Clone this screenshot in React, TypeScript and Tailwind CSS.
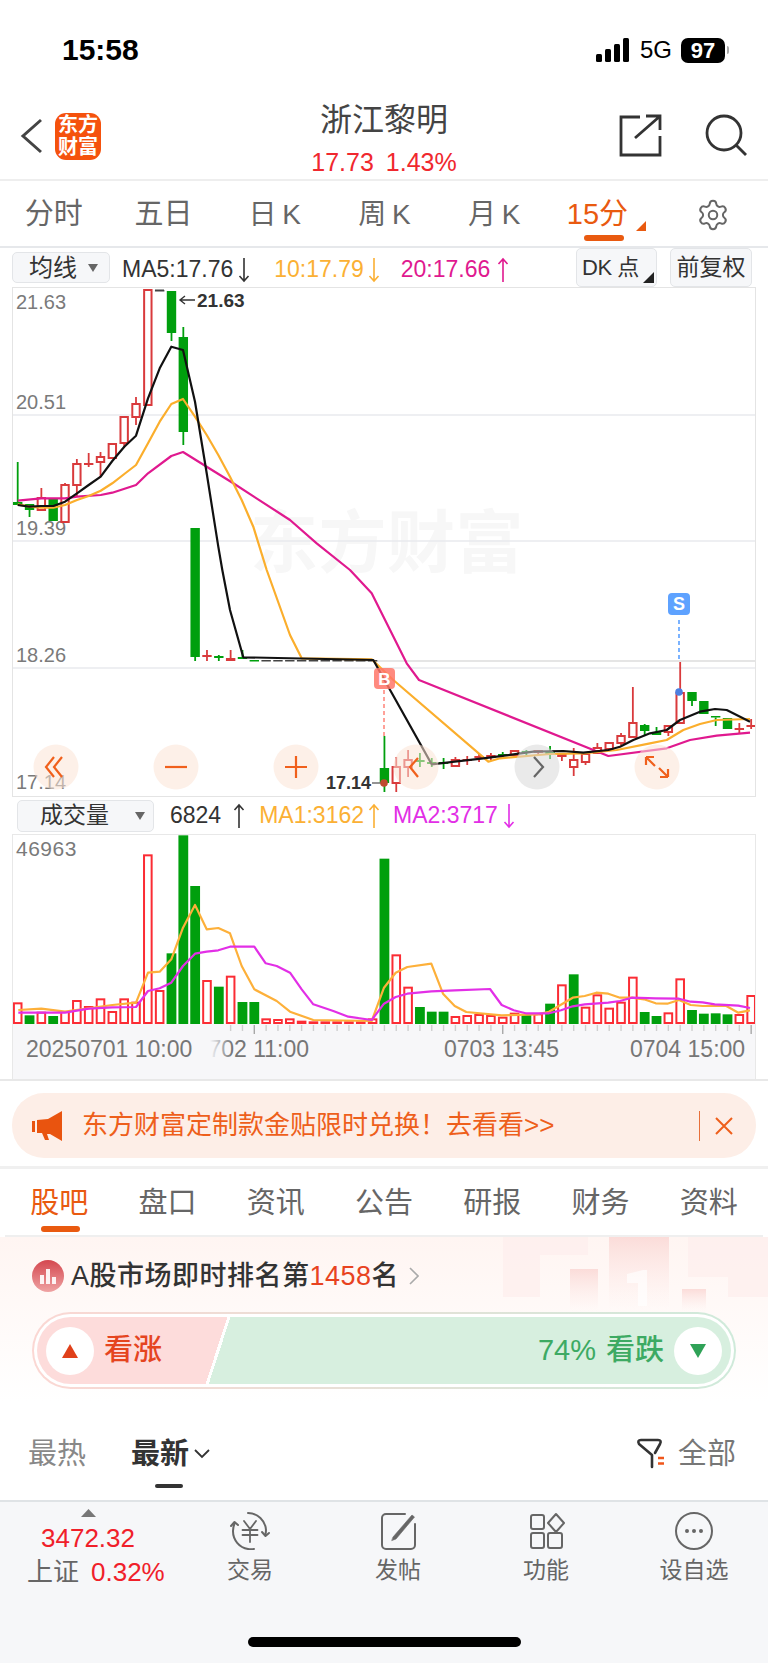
import React from 'react';
import { Settings } from 'lucide-react';

type Candle = [string, number, number, number?, number?];

const RED = '#d93a3c';
const GREEN = '#009f0d';
const cx = (i: number) => 17.7 + 11.83 * i;

// kind, body top, body bottom, wick top, wick bottom (page pixels)
const candles: Candle[] = [
  ['g', 502, 505, 462, 505], ['g', 504, 510, 504, 517], ['r', 498, 510, 488, 510], ['g', 498, 521],
  ['r', 485, 522, 483, 522], ['r', 464, 485, 459, 497], ['R', 463, 465, 453, 467], ['r', 457, 462, 452, 477],
  ['r', 444, 458], ['r', 417, 443, 417, 448], ['r', 404, 417, 397, 425], ['r', 290, 405],
  ['k', 290, 291.5], ['g', 291, 333, 291, 341], ['g', 337, 432, 327, 445], ['g', 528, 657, 528, 661],
  ['R', 655, 657, 650, 661], ['g', 656, 658, 655, 661], ['R', 658, 661, 650, 661], ['g', 657, 659, 650, 659],
  ['g', 660, 661.5], ['k', 660, 661.5], ['k', 660, 661.5], ['k', 660, 661.5], ['k', 660, 661.5],
  ['k', 660, 661.5], ['k', 660, 661.5], ['k', 660, 661.5], ['k', 660, 661.5], ['k', 660, 661.5], ['k', 660, 661.5],
  ['g', 768, 783, 736, 792], ['r', 767, 783, 757, 792], ['r', 760, 767, 750, 777], ['g', 760, 762, 753, 767],
  ['g', 762, 764, 758, 767], ['g', 762, 764, 758, 769], ['r', 760, 766, 757, 767], ['R', 759, 761, 756, 765],
  ['R', 756, 758, 753, 762], ['R', 755, 758, 753, 760], ['g', 754, 756, 752, 758], ['r', 751, 755, 750, 758],
  ['g', 751, 753, 750, 756], ['R', 750, 753, 750, 755], ['g', 751, 754, 746, 759], ['R', 754, 757, 754, 761],
  ['r', 760, 767, 748, 776], ['r', 754, 762, 754, 765], ['r', 748, 753, 743, 754], ['r', 743, 749, 743, 750],
  ['r', 736, 743, 733, 745], ['r', 723, 737, 687, 737], ['g', 725, 731, 724, 735], ['g', 732, 735, 727, 735],
  ['r', 726, 732, 726, 736], ['r', 693, 723, 662, 723], ['g', 692, 701, 692, 706], ['g', 701, 714],
  ['g', 716, 717.5, 716, 726], ['g', 718, 729], ['R', 728, 730, 723, 733], ['R', 725, 727, 719, 729],
];

const volumeTops: [string, number][] = [
  ['r', 607], ['g', 643], ['r', 635], ['g', 645], ['r', 633], ['r', 600], ['r', 618], ['r', 595], ['r', 633], ['r', 595],
  ['r', 605], ['r', 163], ['r', 570], ['g', 457], ['g', 103], ['g', 255], ['r', 540], ['g', 557], ['r', 527], ['g', 603],
  ['g', 603], ['r', 655], ['r', 657], ['r', 655], ['r', 662], ['r', 664], ['r', 664], ['r', 664], ['r', 664], ['r', 664],
  ['r', 655], ['g', 173], ['r', 463], ['r', 560], ['g', 618], ['g', 632], ['g', 632], ['r', 648], ['r', 645], ['r', 642],
  ['r', 645], ['r', 650], ['r', 638], ['g', 640], ['r', 640], ['g', 608], ['r', 553], ['g', 520], ['r', 620], ['r', 583],
  ['r', 623], ['r', 605], ['r', 530], ['g', 633], ['g', 645], ['r', 637], ['r', 535], ['g', 627], ['g', 638], ['g', 637],
  ['g', 640], ['r', 642], ['r', 585],
];

// the curves were read off 3x crops, so keep them in crop units
const crop = (x0: number, y0: number, pts: number[][]) =>
  pts.map(([x, y]) => `${(x0 + x / 3).toFixed(1)},${(y0 + y / 3).toFixed(1)}`).join(' ');

const ma5 = [
  crop(0, 270, [[53, 705], [88, 710], [124, 708], [160, 708], [195, 695], [231, 670], [266, 645], [302, 620], [337, 573], [373, 530], [408, 497], [444, 385], [479, 295], [514, 230], [549, 240], [585, 395], [620, 610], [655, 830], [667, 900]]),
  crop(0, 570, [[690, 120], [730, 262], [1120, 270]]),
  crop(350, 570, [[70, 270], [245, 583], [400, 565], [550, 545], [640, 543], [700, 548], [775, 540], [810, 530], [850, 510], [900, 490], [950, 480], [990, 450], [1050, 425], [1095, 417], [1130, 420], [1200, 455]]),
].join(' ');

const ma10 = [
  crop(0, 270, [[53, 703], [88, 710], [124, 713], [160, 713], [195, 705], [231, 690], [266, 678], [302, 662], [337, 640], [373, 612], [408, 585], [444, 520], [479, 455], [514, 402], [549, 387], [585, 440], [620, 495], [655, 555], [690, 620], [725, 690], [760, 770], [800, 900]]),
  crop(0, 570, [[870, 195], [905, 265], [1115, 268]]),
  crop(350, 570, [[130, 330], [415, 575], [450, 565], [600, 552], [700, 550], [800, 540], [900, 520], [950, 510], [1000, 480], [1050, 462], [1100, 450], [1200, 447]]),
].join(' ');

const ma20 = [
  crop(0, 270, [[53, 692], [124, 685], [195, 685], [231, 680], [302, 675], [337, 668], [408, 645], [444, 610], [514, 558], [549, 546], [620, 590], [700, 640], [870, 750], [950, 820], [1050, 900]]),
  crop(0, 570, [[1115, 70]]),
  crop(350, 570, [[170, 280], [207, 330], [775, 558], [950, 535], [1020, 510], [1100, 497], [1200, 488]]),
].join(' ');

const volMa1 = [
  crop(0, 800, [[55, 627], [124, 623], [195, 632], [266, 622], [337, 612], [408, 605], [444, 515], [479, 512], [514, 475], [549, 380], [585, 312], [620, 385], [655, 381], [690, 397], [725, 495], [763, 565], [830, 600], [870, 632], [940, 657], [1115, 660]]),
  crop(384, 800, [[0, 560], [35, 515], [70, 498], [142, 488], [177, 578], [212, 615], [247, 633], [353, 643], [460, 640], [495, 632], [566, 590], [602, 585], [637, 575], [673, 578], [708, 590], [743, 590], [780, 595], [815, 607], [850, 608], [885, 597], [920, 612], [956, 615], [1027, 615], [1063, 635], [1098, 628]]),
].join(' ');

const volMa2 = [
  crop(0, 800, [[55, 635], [195, 635], [266, 623], [337, 619], [408, 618], [444, 570], [479, 562], [514, 545], [549, 495], [585, 458], [620, 452], [655, 448], [690, 437], [763, 437], [797, 487], [830, 495], [870, 515], [905, 565], [940, 610], [1000, 630], [1045, 647], [1115, 657]]),
  crop(384, 800, [[0, 608], [35, 588], [70, 578], [142, 571], [212, 568], [318, 564], [353, 612], [389, 628], [425, 637], [495, 637], [531, 628], [566, 616], [602, 610], [673, 605], [708, 600], [743, 590], [815, 592], [885, 593], [920, 602], [956, 604], [992, 610], [1063, 614], [1098, 621]]),
].join(' ');

const Arrow: React.FC<{ up?: boolean; color: string }> = ({ up, color }) => (
  <svg width="12" height="26" viewBox="0 0 12 26" fill="none" stroke={color} strokeWidth="1.6">
    {up ? <path d="M6 25V2M1.5 7L6 2l4.5 5" /> : <path d="M6 1v23M1.5 19L6 24l4.5-5" />}
  </svg>
);

const Caret = () => (
  <svg width="12" height="10" viewBox="0 0 12 10" fill="#666">
    <path d="M1 1h10L6 9z" />
  </svg>
);

const PriceChart = () => (
  <svg width="742" height="508" viewBox="13 288 742 508" className="block">
    <text x="250" y="567" fontSize="68" fontWeight="700" fill="#f7f7f7" letterSpacing="0.500">东方财富</text>
    <g stroke="#e8eaee" strokeWidth="1.5">
      <line x1="13" x2="755" y1="415" y2="415" />
      <line x1="13" x2="755" y1="541" y2="541" />
      <line x1="13" x2="755" y1="668" y2="668" />
      <line x1="355" x2="755" y1="661" y2="661" stroke="#dcdcdc" />
    </g>
    <g fontSize="20" fill="#7a7a7a" dominantBaseline="central">
      <text x="16" y="302">21.63</text>
      <text x="16" y="402">20.51</text>
      <text x="16" y="528">19.39</text>
      <text x="16" y="655">18.26</text>
      <text x="16" y="782">17.14</text>
    </g>
    {candles.map(([kind, top, bot, wt, wb], i) => {
      const x = cx(i);
      const color = kind === 'g' ? GREEN : kind === 'k' ? '#444' : RED;
      return (
        <g key={i}>
          {wt !== undefined && <line x1={x} x2={x} y1={wt} y2={top} stroke={color} strokeWidth="1.8" />}
          {wb !== undefined && <line x1={x} x2={x} y1={bot} y2={wb} stroke={color} strokeWidth="1.8" />}
          {kind === 'r' ? (
            <rect x={x - 3.7} y={top} width={7.4} height={bot - top} fill="#fff" stroke={color} strokeWidth="2" />
          ) : (
            <rect x={x - 4.7} y={top} width={9.4} height={bot - top} fill={color} />
          )}
        </g>
      );
    })}
    <polyline points={ma20} fill="none" stroke="#e0198f" strokeWidth="2.2" strokeLinejoin="round" />
    <polyline points={ma10} fill="none" stroke="#fbae2c" strokeWidth="2.2" strokeLinejoin="round" />
    <polyline points={ma5} fill="none" stroke="#111" strokeWidth="2.2" strokeLinejoin="round" />

    <path d="M195 300h-15M185 296l-5 4 5 4" fill="none" stroke="#333" strokeWidth="1.4" />
    <text x="197" y="300" fontSize="19" fontWeight="700" fill="#333" dominantBaseline="central">21.63</text>
    <rect x="155" y="289.5" width="9" height="1.5" fill="#444" />
    <text x="326" y="783" fontSize="18" fontWeight="700" fill="#333" dominantBaseline="central">17.14</text>
    <line x1="372" x2="384" y1="783" y2="783" stroke="#666" strokeWidth="1.4" />
    <circle cx="384" cy="783" r="3.8" fill="#c0492f" />

    <line x1="384" x2="384" y1="690" y2="736" stroke="#ff8a80" strokeWidth="1.6" strokeDasharray="4 3" />
    <rect x="374" y="668" width="21" height="21" rx="4" fill="#ff7568" fillOpacity="0.85" />
    <text x="384.5" y="679" fontSize="17" fontWeight="700" fill="#fff" textAnchor="middle" dominantBaseline="central">B</text>
    <line x1="679" x2="679" y1="620" y2="660" stroke="#5aa0ff" strokeWidth="1.6" strokeDasharray="4 3" />
    <rect x="668" y="593" width="22" height="22" rx="4" fill="#5ea2ff" />
    <text x="679" y="604" fontSize="18" fontWeight="700" fill="#fff" textAnchor="middle" dominantBaseline="central">S</text>
    <circle cx="679" cy="692" r="3.8" fill="#4d7fe0" />

    {[56, 176, 296, 416, 657].map((x) => (
      <circle key={x} cx={x} cy="767" r="22.5" fill="#fbe3d6" fillOpacity="0.55" />
    ))}
    <circle cx="537" cy="767" r="22.5" fill="#d8d8d8" fillOpacity="0.55" />
    <g fill="none" stroke="#f0601c" strokeWidth="2.2">
      <path d="M54 757l-8 10 8 10M62 757l-8 10 8 10" />
      <path d="M165 767h22" />
      <path d="M285 767h22M296 756v22" />
      <path d="M420 758l-8 9 8 10" transform="translate(-2 0)" />
      <path d="M646 757h8M646 757v8M646 757l9 9M668 777h-8M668 777v-8M668 777l-9-9" />
    </g>
    <path d="M534 757l9 10-9 10" fill="none" stroke="#666" strokeWidth="2.2" />
  </svg>
);

const VolumeChart = () => (
  <svg width="742" height="244" viewBox="13 834 742 244" className="block">
    <defs>
      <linearGradient id="fade" x1="0" x2="1" y1="0" y2="0">
        <stop offset="0.45" stopColor="#f7f7f9" />
        <stop offset="1" stopColor="#f7f7f9" stopOpacity="0" />
      </linearGradient>
    </defs>
    <rect x="13" y="1023" width="742" height="55" fill="#f7f7f9" />
    <text x="16" y="847" fontSize="21" letterSpacing="0.5" fill="#7a7a7a" dominantBaseline="central">46963</text>
    {volumeTops.map(([kind, top], i) => {
      const x = cx(i);
      const y = 800 + top / 3;
      return kind === 'g' ? (
        <rect key={i} x={x - 4.9} y={y} width={9.8} height={1023 - y} fill={GREEN} />
      ) : (
        <rect key={i} x={x - 3.8} y={y} width={7.6} height={1022 - y} fill="#fff" stroke="#fb2c34" strokeWidth="2" />
      );
    })}
    <polyline points={volMa1} fill="none" stroke="#fdb03a" strokeWidth="2.2" strokeLinejoin="round" />
    <polyline points={volMa2} fill="none" stroke="#e22fe6" strokeWidth="2.2" strokeLinejoin="round" />
    {candles.map((_, i) =>
      i >= 18 ? (
        <line
          key={i}
          x1={cx(i)}
          x2={cx(i)}
          y1="1024"
          y2={i === 20 || i === 41 || i === 62 ? 1033 : 1030}
          stroke={i === 20 || i === 41 || i === 62 ? '#a8a8a8' : '#cfcfcf'}
          strokeWidth="1.4"
        />
      ) : null,
    )}
    <g fontSize="23" fill="#767676" dominantBaseline="central">
      <text x="309" y="1048" textAnchor="end">0702 11:00</text>
      <rect x="192" y="1036" width="40" height="26" fill="url(#fade)" />
      <text x="26" y="1048">20250701 10:00</text>
      <text x="444" y="1048">0703 13:45</text>
      <text x="630" y="1048">0704 15:00</text>
    </g>
  </svg>
);

const NavIcon: React.FC<{ kind: string }> = ({ kind }) => (
  <svg width="46" height="38" viewBox="0 0 46 38" fill="none" stroke="#666" strokeWidth="2" strokeLinecap="round" strokeLinejoin="round">
    {kind === 'trade' && (
      <>
        <path d="M21 1a18 18 0 0 1 18 17c0 2-.3 3.500-.8 5" />
        <path d="M35 20l3.500 4 3.500-3" />
        <path d="M27 37a18 18 0 0 1-6 0A18 18 0 0 1 6 19c0-3 .6-5.500 1.800-8" />
        <path d="M4 14l3.500-4 3.500 3" />
        <path d="M17 9l6 8 6-8M15.500 18h15M15.500 23h15M23 17v13" strokeWidth="1.8" />
      </>
    )}
    {kind === 'post' && (
      <>
        <path d="M30 2H11a4 4 0 0 0-4 4v27a4 4 0 0 0 4 4h25a4 4 0 0 0 4-4V12" />
        <path d="M18 25L37 3l2.500 2L21 27l-4 1.500z" fill="#666" strokeWidth="0.6" />
      </>
    )}
    {kind === 'grid' && (
      <>
        <rect x="8" y="3" width="13" height="14" rx="2" />
        <path d="M33 2l8 9-8 9-8-9z" />
        <rect x="8" y="21" width="13" height="15" rx="2" />
        <rect x="25" y="21" width="14" height="15" rx="2" />
      </>
    )}
    {kind === 'more' && (
      <>
        <circle cx="23" cy="19" r="18" />
        <circle cx="16" cy="19" r="1" fill="#666" />
        <circle cx="23" cy="19" r="1" fill="#666" />
        <circle cx="30" cy="19" r="1" fill="#666" />
      </>
    )}
  </svg>
);

const App: React.FC = () => {
  const infoTabs = ['盘口', '资讯', '公告', '研报', '财务', '资料'];

  return (
    <div className="w-[768px] h-[1663px] bg-white flex flex-col overflow-hidden font-['Liberation_Sans','Noto_Sans_CJK_SC',sans-serif] text-[#333]">
      {/* Status bar */}
      <div className="h-[100px] flex items-start justify-between pt-[32px] pl-[62px] pr-[39px] text-black">
        <span className="text-[30px] leading-[36px] font-bold">15:58</span>
        <div className="flex items-center gap-[9px] h-[36px]">
          <svg width="35" height="24" viewBox="0 0 35 24" fill="#000">
            <rect x="0" y="16" width="6" height="8" rx="1.500" />
            <rect x="9" y="11" width="6" height="13" rx="1.500" />
            <rect x="18" y="6" width="6" height="18" rx="1.500" />
            <rect x="27" y="0" width="6" height="24" rx="1.500" />
          </svg>
          <span className="text-[24px] leading-none">5G</span>
          <div className="flex items-center gap-[2px]">
            <span className="w-[44px] h-[25px] bg-black rounded-[7px] text-white text-[22px] font-bold leading-[25px] text-center">97</span>
            <span className="w-[2px] h-[8px] bg-[#aaa] rounded-r" />
          </div>
        </div>
      </div>

      {/* Title bar */}
      <div className="h-[81px] border-b-2 border-[#eeeeee] grid grid-cols-[1fr_auto_1fr]">
        <div className="flex items-center pl-[20px] pb-[7px]">
          <svg width="24" height="36" viewBox="0 0 24 36" fill="none" stroke="#444" strokeWidth="3">
            <path d="M21 2L3 18l18 16" />
          </svg>
          <div className="ml-[11px] w-[46px] h-[47px] rounded-[11px] bg-[#f5520d] text-white text-[20px] font-bold leading-[22px] text-center flex items-center justify-center">
            东方<br />财富
          </div>
        </div>
        <div className="flex flex-col items-center pt-[1px]">
          <span className="h-[38px] text-[32px] leading-[38px] text-[#444]">浙江黎明</span>
          <div className="mt-[9px] h-[28px] flex gap-[12px] text-[25px] leading-[28px] text-[#f0282e]">
            <span>17.73</span>
            <span>1.43%</span>
          </div>
        </div>
        <div className="flex items-start justify-end pt-[14px] pr-[21px] gap-[43px]">
          <svg width="44" height="43" viewBox="0 0 44 43" fill="none" stroke="#333" strokeWidth="2.800">
            <path d="M22 3H3v38h39V22M17 24L41 3M28 2h14v14" />
          </svg>
          <svg width="42" height="42" viewBox="0 0 42 42" fill="none" stroke="#333" strokeWidth="2.800">
            <circle cx="19" cy="19" r="17" />
            <path d="M31 31l10 10" />
          </svg>
        </div>
      </div>

      {/* Period tabs */}
      <div className="h-[67px] grid grid-cols-7 border-b-2 border-[#e6e8eb]">
        <div className="flex items-center justify-center text-[29px] text-[#666] pt-[2px] pr-[2px]">分时</div>
        <div className="flex items-center justify-center text-[29px] text-[#666] pt-[2px] pr-[2px]">五日</div>
        {['日 K', '周 K', '月 K'].map((t) => (
          <div key={t} className="flex items-center justify-center text-[28px] text-[#666] pt-[2px] tracking-[-1px]">{t}</div>
        ))}
        <div className="relative flex items-center justify-center text-[29px] text-[#e95a10] pt-[2px] pr-[12px]">
          15分
          <svg width="10" height="10" viewBox="0 0 10 10" className="absolute left-[87px] top-[40px]" fill="#e95a10">
            <path d="M10 0v10H0z" />
          </svg>
          <span className="absolute left-[35px] bottom-[5px] w-[40px] h-[6px] rounded-full bg-[#e95a10]" />
        </div>
        <div className="flex items-center justify-center pt-[2px]">
          <Settings size={34} strokeWidth={1.4} color="#666" />
        </div>
      </div>

      {/* MA values */}
      <div className="h-[39px] flex items-center text-[23px]">
        <div className="ml-[12px] w-[98px] h-[31px] bg-[#f6f7f9] border border-[#e3e5e8] rounded-[5px] flex items-center pl-[16px] gap-[10px] text-[#333] text-[24px]">
          均线<Caret />
        </div>
        <span className="ml-[12px] pt-[4px]">MA5:17.76</span>
        <span className="ml-[5px] pt-[4px]"><Arrow color="#333" /></span>
        <span className="ml-[24px] pt-[4px] text-[#fbb034]">10:17.79</span>
        <span className="ml-[4px] pt-[4px]"><Arrow color="#fbb034" /></span>
        <span className="ml-[21px] pt-[4px] text-[#e0198f]">20:17.66</span>
        <span className="ml-[7px] pt-[4px]"><Arrow up color="#e0198f" /></span>
        <div className="ml-auto relative w-[81px] h-[39px] bg-[#f6f7f9] border border-[#e3e5e8] rounded-[5px] flex items-center pl-[5px] text-[22px] tracking-[-0.5px]">
          DK 点
          <svg width="11" height="11" viewBox="0 0 11 11" className="absolute right-[2px] bottom-[3px]" fill="#222">
            <path d="M11 0v11H0z" />
          </svg>
        </div>
        <div className="ml-[13px] mr-[16px] w-[82px] h-[39px] bg-[#f6f7f9] border border-[#e3e5e8] rounded-[5px] flex items-center justify-center text-[23px]">
          前复权
        </div>
      </div>

      <div className="ml-[12px] w-[744px] h-[510px] border border-[#e4e4e4]">
        <PriceChart />
      </div>

      {/* Volume values */}
      <div className="h-[37px] flex items-center text-[23px]">
        <div className="ml-[17px] w-[137px] h-[32px] bg-[#f6f7f9] border border-[#e3e5e8] rounded-[5px] flex items-center pl-[22px] gap-[25px]">
          成交量<Caret />
        </div>
        <span className="ml-[16px]">6824</span>
        <span className="ml-[12px]"><Arrow up color="#333" /></span>
        <span className="ml-[14px] text-[#fbb034]">MA1:3162</span>
        <span className="ml-[4px]"><Arrow up color="#fbb034" /></span>
        <span className="ml-[13px] text-[#e22fe6]">MA2:3717</span>
        <span className="ml-[5px]"><Arrow color="#e22fe6" /></span>
      </div>

      <div className="ml-[12px] w-[744px] h-[245px] border-x border-t border-[#e8e8e8]">
        <VolumeChart />
      </div>
      <div className="h-[2px] bg-[#e8e8e8]" />

      {/* Promo */}
      <div className="h-[88px] border-b-[3px] border-[#f0f0f0] pt-[12px]">
        <div className="mx-[12px] h-[65px] rounded-[32px] bg-[#fdeee7] flex items-center pl-[20px] text-[#ee5f1b] text-[26px]">
          <svg width="32" height="30" viewBox="0 0 32 30" fill="#e9540f">
            <rect x="0" y="10" width="3" height="11" />
            <path d="M5 9l11-1L30 0v30l-12-7-3 0 2 6-4 0-3-7H5z" />
          </svg>
          <span className="ml-[18px]">东方财富定制款金贴限时兑换！去看看&gt;&gt;</span>
          <span className="ml-auto w-[1px] h-[30px] bg-[#e8703a]" />
          <svg width="18" height="18" viewBox="0 0 18 18" className="ml-[15px] mr-[23px]" fill="none" stroke="#ee5f1b" strokeWidth="2">
            <path d="M1 1l16 16M17 1L1 17" />
          </svg>
        </div>
      </div>

      {/* Info tabs */}
      <div className="h-[68px] ml-[5px] mr-[5px] grid grid-cols-7 border-b-2 border-[#efefef]">
        <div className="relative flex items-center justify-center text-[29px] text-[#e95a10] pt-[3px]">
          股吧
          <span className="absolute left-[36px] bottom-[3px] w-[39px] h-[6px] rounded-full bg-[#e95a10]" />
        </div>
        {infoTabs.map((t) => (
          <div key={t} className="flex items-center justify-center text-[29px] text-[#666] pt-[3px]">{t}</div>
        ))}
      </div>

      {/* Community */}
      <div className="relative h-[263px] bg-[linear-gradient(180deg,#fff5f2_0px,#ffffff_165px)]">
        <svg width="288" height="76" viewBox="0 0 288 76" className="absolute left-[480px] top-0">
          <defs>
            <linearGradient id="tower" x1="0" x2="0" y1="0" y2="1">
              <stop offset="0" stopColor="#fbdcd9" />
              <stop offset="1" stopColor="#fdecea" stopOpacity="0" />
            </linearGradient>
          </defs>
          <path d="M23 0h85v18H60v42H23z" fill="#fdeeec" opacity="0.7" />
          <path d="M208 0h80v60h-40V40h-40z" fill="#fdeeec" opacity="0.7" />
          <rect x="90" y="32" width="28" height="42" fill="url(#tower)" />
          <rect x="129" y="0" width="60" height="72" fill="url(#tower)" />
          <rect x="202" y="52" width="24" height="22" fill="url(#tower)" />
          <path d="M147 37l16-4h4v36h-9V46h-11z" fill="#fff" opacity="0.65" />
        </svg>

        <div className="relative h-[75px] flex items-center pl-[32px] text-[27px] font-medium pt-[3px] tracking-[0.5px]">
          <svg width="32" height="32" viewBox="0 0 32 32" className="mr-[7px]">
            <defs>
              <linearGradient id="rank" x1="0" x2="0" y1="0" y2="1">
                <stop offset="0" stopColor="#d4474f" />
                <stop offset="1" stopColor="#efa3a3" />
              </linearGradient>
            </defs>
            <circle cx="16" cy="16" r="16" fill="url(#rank)" />
            <path d="M8 24v-9h4v9zM14 24V9h4v15zM20 24v-7h4v7z" fill="#fff" opacity="0.9" />
          </svg>
          <span>A股市场即时排名第</span>
          <span className="text-[#e8431f]">1458</span>
          <span>名</span>
          <svg width="10" height="18" viewBox="0 0 10 18" className="ml-[10px]" fill="none" stroke="#aaa" strokeWidth="1.600">
            <path d="M1 1l8 8-8 8" />
          </svg>
        </div>

        <div className="relative mx-[32px] h-[77px] rounded-full p-[2px] bg-[linear-gradient(90deg,#fbd7d3,#cfeada)]">
          <div className="h-full rounded-full bg-white p-[3px]">
            <div className="h-full rounded-full flex items-center px-[9px] bg-[linear-gradient(108deg,#fddcdb_181px,#ffffff_181px,#ffffff_184px,#d7efdf_184px)]">
              <div className="w-[48px] h-[48px] rounded-full bg-white flex items-center justify-center">
                <svg width="16" height="14" viewBox="0 0 16 14" fill="#e0401a"><path d="M8 0l8 14H0z" /></svg>
              </div>
              <span className="ml-[10px] text-[29px] text-[#e5451f] font-medium">看涨</span>
              <span className="ml-auto text-[29px] text-[#3daa63] font-medium">74%</span>
              <span className="ml-[10px] text-[29px] text-[#3daa63] font-medium">看跌</span>
              <div className="ml-[10px] w-[48px] h-[48px] rounded-full bg-white flex items-center justify-center">
                <svg width="16" height="14" viewBox="0 0 16 14" fill="#2fa257"><path d="M0 0h16L8 14z" /></svg>
              </div>
            </div>
          </div>
        </div>

        <div className="relative mt-[47px] h-[64px] flex items-start pl-[28px] pr-[32px] text-[29px] leading-[36px]">
          <span className="text-[#888]">最热</span>
          <div className="relative ml-[45px] flex items-center">
            <span className="font-bold text-[#333]">最新</span>
            <svg width="16" height="10" viewBox="0 0 16 10" className="ml-[5px]" fill="none" stroke="#333" strokeWidth="1.800">
              <path d="M1 1l7 7 7-7" />
            </svg>
            <span className="absolute left-[24px] top-[48px] w-[28px] h-[4px] rounded-full bg-[#333]" />
          </div>
          <svg width="30" height="32" viewBox="0 0 30 32" className="ml-auto mt-[2px]" fill="none" stroke="#333" strokeWidth="2.600" strokeLinecap="round" strokeLinejoin="round">
            <path d="M16 29V17L3 6Q1 2 5 2h17q4 0 2 4l-5 9" />
            <path d="M22 20h6M22 25.500h6" stroke="#f0561a" strokeWidth="2.600" strokeLinecap="butt" />
          </svg>
          <span className="ml-[12px] text-[#777]">全部</span>
        </div>
      </div>

      {/* Bottom nav */}
      <div className="flex-1 relative border-t-2 border-[#dfe3e6] bg-[#f6f7f9] flex">
        <div className="w-[176px] flex flex-col items-center pt-[7px]">
          <svg width="15" height="8" viewBox="0 0 15 8" fill="#777"><path d="M7.500 0L15 8H0z" /></svg>
          <span className="mt-[7px] h-[28px] text-[26px] leading-[28px] text-[#f0202a]">3472.32</span>
          <div className="mt-[5px] h-[30px] self-start pl-[27px] flex items-center gap-[12px] text-[26px] whitespace-nowrap">
            <span className="text-[#666]">上证</span>
            <span className="text-[#f0202a]">0.32%</span>
          </div>
        </div>
        {[
          ['trade', '交易'],
          ['post', '发帖'],
          ['grid', '功能'],
          ['more', '设自选'],
        ].map(([kind, label]) => (
          <div key={kind} className="w-[148px] flex flex-col items-center pt-[10px]">
            <NavIcon kind={kind} />
            <span className="mt-[6px] h-[28px] text-[23px] leading-[28px] text-[#666]">{label}</span>
          </div>
        ))}
        <div className="absolute left-[248px] top-[135px] w-[273px] h-[10px] rounded-full bg-black" />
      </div>
    </div>
  );
};

export default App;
